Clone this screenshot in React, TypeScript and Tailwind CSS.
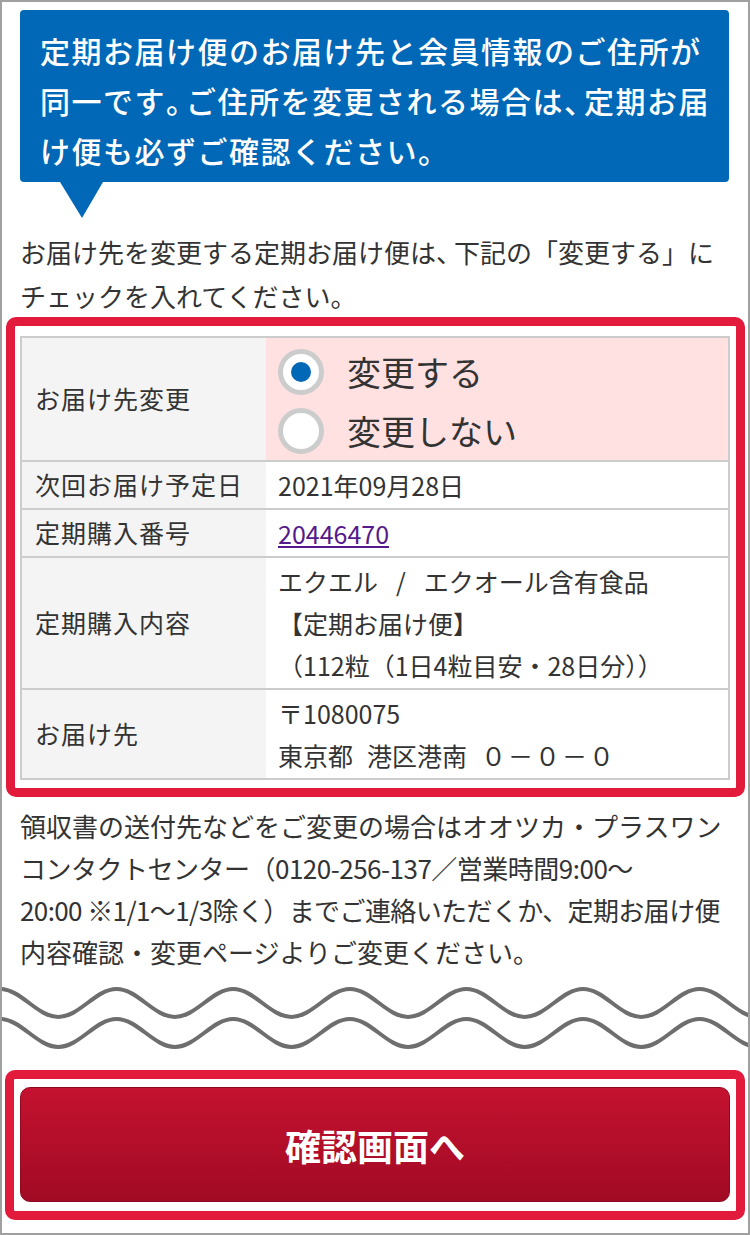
import React, { useState } from "react";

const jp = "font-['Noto_Sans_CJK_JP','Noto_Sans',sans-serif]";

function Radio({ checked, label, onClick }: { checked: boolean; label: string; onClick: () => void }) {
  return (
    <button onClick={onClick} className="flex items-center h-[59px] gap-[23px] text-left">
      <span className="w-[46px] h-[46px] rounded-full border-[5px] border-[#cccccc] bg-white flex items-center justify-center shrink-0">
        {checked && <span className="w-[20px] h-[20px] rounded-full bg-[#0068b7]"></span>}
      </span>
      <span className="text-[34px] leading-[59px] text-[#333]">{label}</span>
    </button>
  );
}

function Row({ label, children, first }: { label: string; children: React.ReactNode; first?: boolean }) {
  return (
    <div className={`flex ${first ? "" : "border-t-2 border-[#cccccc]"}`}>
      <div className="w-[244px] shrink-0 bg-[#f4f4f4] flex items-center pl-[13px] text-[25px] tracking-[1px] text-[#333]">
        {label}
      </div>
      <div className="flex-1 py-[2px] pl-[12px] text-[25px] leading-[42px] text-[#333] whitespace-nowrap">{children}</div>
    </div>
  );
}

export default function App() {
  const [change, setChange] = useState(true);

  return (
    <div className={`w-[750px] h-[1235px] border-2 border-[#a0a0a0] bg-white overflow-hidden pt-[8px] ${jp}`}>
      {/* Notice balloon */}
      <div className="ml-[18px] mr-[19px] bg-[#0068b7] rounded-[4px] pl-[20px] pr-[6px] pt-[15px] pb-[7px] text-white text-[30px] leading-[50px] font-medium tracking-[1.5px] whitespace-nowrap">
        定期お届け便のお届け先と会員情報のご住所が
        <br />
        同一です<span className="tracking-[-10px]">。</span>ご住所を変更される場合は<span className="tracking-[-10px]">、</span>定期お届
        <br />
        け便も必ずご確認ください。
      </div>
      <div className="ml-[58px] h-[36px]">
        <svg width="43" height="36" viewBox="0 0 43 36">
          <polygon points="0,0 43,0 22,36" fill="#0068b7" />
        </svg>
      </div>

      <p className="ml-[18px] mt-[12px] text-[26px] leading-[44px] text-[#333] whitespace-nowrap">
        お届け先を変更する定期お届け便は<span className="tracking-[-8px]">、</span>下記の「変更する」に
        <br />
        チェックを入れてください。
      </p>

      {/* Form table */}
      <div className="-mt-[1px] ml-[4px] mr-[3px] border-[9px] border-[#e21a3b] rounded-[10px] pl-[5px] pr-[6px] pt-[10px] pb-[8px]">
        <div className="border-2 border-[#cccccc]">
          <div className="flex">
            <div className="w-[244px] shrink-0 bg-[#f4f4f4] flex items-center pl-[13px] text-[25px] tracking-[1px] text-[#333]">
              お届け先変更
            </div>
            <div className="flex-1 bg-[#ffe1e1] pl-[12px] pt-[4px] flex flex-col">
              <Radio checked={change} label="変更する" onClick={() => setChange(true)} />
              <Radio checked={!change} label="変更しない" onClick={() => setChange(false)} />
            </div>
          </div>
          <Row label="次回お届け予定日">2021年09月28日</Row>
          <Row label="定期購入番号">
            <a href="#" className="text-[#551a8b] underline">20446470</a>
          </Row>
          <Row label="定期購入内容">
            エクエル<span className="mx-[18px]">/</span>エクオール含有食品
            <br />
            【定期お届け便】
            <br />
            （112粒（1日4粒目安・28日分））
          </Row>
          <Row label="お届け先">
            〒1080075
            <br />
            東京都<span className="ml-[14px]">港区港南</span>
            <span className="ml-[14px] tracking-[2px]">０－０－０</span>
          </Row>
        </div>
      </div>

      <p className="ml-[18px] mt-[8px] text-[26px] leading-[42px] text-[#333] whitespace-nowrap">
        領収書の送付先などをご変更の場合はオオツカ・プラスワン
        <br />
        <span className="tracking-[-0.5px]">コンタクトセンター（0120-256-137／営業時間9:00～</span>
        <br />
        <span className="tracking-[-0.6px]">20:00 ※1/1～1/3除く）までご連絡いただくか、定期お届け便</span>
        <br />
        内容確認・変更ページよりご変更ください。
      </p>

      {/* Wavy divider */}
      <svg className="block mt-[7px] -ml-[2px]" width="750" height="72" viewBox="0 0 750 72">
        {[0, 30].map((dy) => (
          <path
            key={dy}
            transform={`translate(0 ${dy})`}
            d="M0,9 C21,9 37.3,37 58.3,37 S95.6,9 116.6,9 S153.9,37 174.9,37 S212.2,9 233.2,9 S270.5,37 291.5,37 S328.8,9 349.8,9 S387.1,37 408.1,37 S445.4,9 466.4,9 S503.7,37 524.7,37 S562,9 583,9 S620.3,37 641.3,37 S678.6,9 699.6,9 S736.9,37 757.9,37"
            fill="none"
            stroke="#6e6e6e"
            strokeWidth="4"
          />
        ))}
      </svg>

      {/* Submit */}
      <div className="mt-[18px] ml-[3px] mr-[3px] border-[9px] border-[#e21a3b] rounded-[10px] pl-[6px] pr-[6px] pt-[8px] pb-[9px]">
        <button className="w-full h-[115px] rounded-[10px] border border-[#8e0b1f] bg-gradient-to-b from-[#c41230] to-[#a10a24] text-white text-[36px] font-bold">
          確認画面へ
        </button>
      </div>
    </div>
  );
}
